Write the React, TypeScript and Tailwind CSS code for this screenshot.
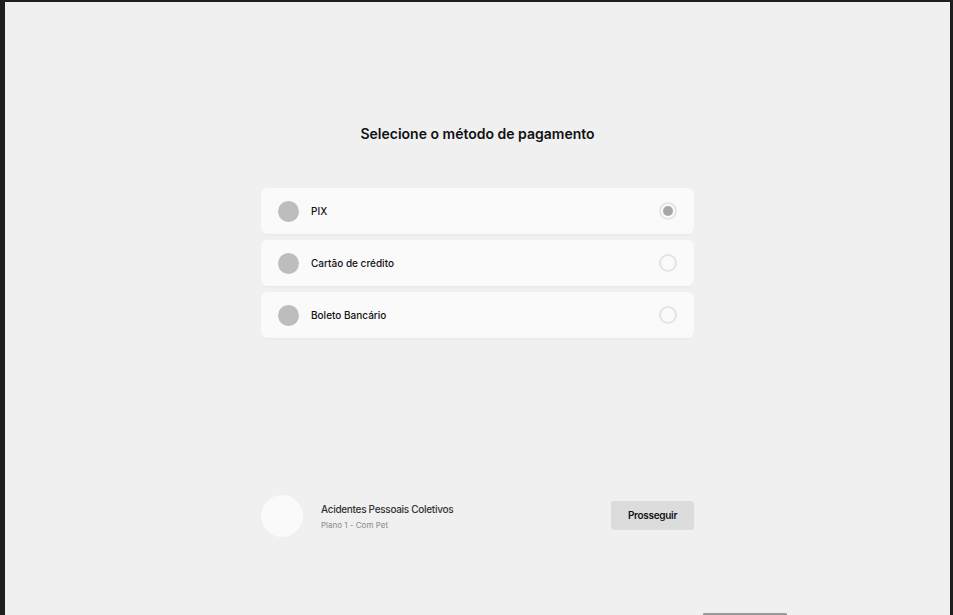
import React from "react";

const methods = [
  { label: "PIX", selected: true },
  { label: "Cartão de crédito", selected: false },
  { label: "Boleto Bancário", selected: false },
];

export default function App() {
  return (
    <div
      className="w-[953px] h-[615px] bg-[#1e1e1e] pt-[2px] pl-[5px] pr-[3px] overflow-hidden"
      style={{ fontFamily: "Inter, 'Noto Sans', sans-serif" }}
    >
      <div className="h-full bg-[#f0f0f0] flex flex-col">
        <div className="flex flex-col items-center pt-[122px]">
          <h1 className="text-[14px] leading-[20px] font-semibold text-[#111]">
            Selecione o método de pagamento
          </h1>
          <div className="mt-[44px] w-[433px] flex flex-col gap-[6px]">
            {methods.map((m) => (
              <div
                key={m.label}
                className="h-[46px] bg-[#fafafa] rounded-[6px] shadow-[0_1px_2px_rgba(0,0,0,0.04)] flex items-center pl-[17px] pr-[17px]"
              >
                <div className="w-[21px] h-[21px] rounded-full bg-[#bdbdbd]" />
                <span className="ml-[12px] text-[10px] text-[#111] font-medium">{m.label}</span>
                <div className="ml-auto w-[18px] h-[18px] rounded-full border-2 border-[#e4e4e4] flex items-center justify-center">
                  {m.selected && <div className="w-[10px] h-[10px] rounded-full bg-[#a6a6a6]" />}
                </div>
              </div>
            ))}
          </div>
          <div className="mt-[157px] w-[433px] flex items-center">
            <div className="w-[42px] h-[42px] rounded-full bg-[#fafafa]" />
            <div className="ml-[18px] flex flex-col">
              <span className="text-[10px] leading-[14px] text-[#333] font-medium tracking-[-0.3px]">
                Acidentes Pessoais Coletivos
              </span>
              <span className="mt-[3px] text-[8px] leading-[12px] text-[#8a8a8a]">
                Plano 1 - Com Pet
              </span>
            </div>
            <button className="ml-auto w-[83px] h-[29px] -mt-[1px] rounded-[3px] bg-[#dcdcdc] text-[10px] font-semibold text-[#111] tracking-[-0.3px]">
              Prosseguir
            </button>
          </div>
        </div>
        <div className="mt-auto ml-[698px] w-[84px] h-[2px] bg-[#9a9a9a] rounded-t-[1px]" />
      </div>
    </div>
  );
}
